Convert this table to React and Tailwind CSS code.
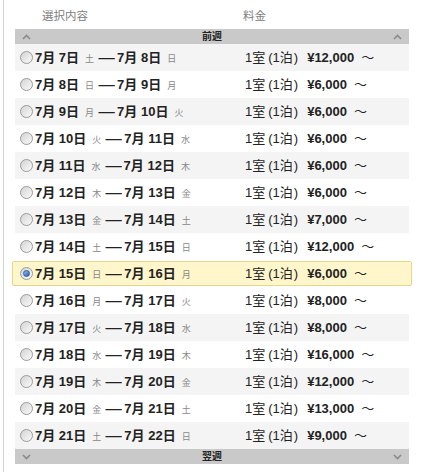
import React from "react";

const rows = [
  ["7月 7日", "土", "7月 8日", "日", "¥12,000"],
  ["7月 8日", "日", "7月 9日", "月", "¥6,000"],
  ["7月 9日", "月", "7月 10日", "火", "¥6,000"],
  ["7月 10日", "火", "7月 11日", "水", "¥6,000"],
  ["7月 11日", "水", "7月 12日", "木", "¥6,000"],
  ["7月 12日", "木", "7月 13日", "金", "¥6,000"],
  ["7月 13日", "金", "7月 14日", "土", "¥7,000"],
  ["7月 14日", "土", "7月 15日", "日", "¥12,000"],
  ["7月 15日", "日", "7月 16日", "月", "¥6,000"],
  ["7月 16日", "月", "7月 17日", "火", "¥8,000"],
  ["7月 17日", "火", "7月 18日", "水", "¥8,000"],
  ["7月 18日", "水", "7月 19日", "木", "¥16,000"],
  ["7月 19日", "木", "7月 20日", "金", "¥12,000"],
  ["7月 20日", "金", "7月 21日", "土", "¥13,000"],
  ["7月 21日", "土", "7月 22日", "日", "¥9,000"],
];

function Radio({ on }) {
  return (
    <span className="w-[13px] h-[13px] rounded-full border border-[#9a9a9a] bg-gradient-to-br from-[#d4d4d4] to-[#fafafa] flex items-center justify-center shrink-0">
      {on && <span className="w-[7px] h-[7px] rounded-full bg-gradient-to-br from-[#8fc3f5] to-[#1d5fb5] border border-[#2a5d9a]" />}
    </span>
  );
}

function Chevron({ up }) {
  return (
    <svg width="9" height="6" viewBox="0 0 9 6" className="shrink-0">
      <path d={up ? "M1 5 L4.5 1.5 L8 5" : "M1 1 L4.5 4.5 L8 1"} fill="none" stroke="#8a8a8a" strokeWidth="1.6" />
    </svg>
  );
}

function Bar({ label, up }) {
  return (
    <div className="h-[15px] bg-[#c9c9c9] flex items-center justify-between px-[7px]">
      <Chevron up={up} />
      <span className="text-[10px] font-bold text-[#222] leading-none">{label}</span>
      <Chevron up={up} />
    </div>
  );
}

export default function App() {
  return (
    <div className="w-[423px] h-[472px] bg-white overflow-hidden" style={{ fontFamily: '"Liberation Sans", "Noto Sans CJK JP", sans-serif' }}>
      <div className="ml-[3px] border-l border-[#d4d4d4] h-full pl-[11px] pr-[12px]">
        <div className="w-[394px]">
          <div className="h-[29px] flex items-end pb-[7px] text-[11.5px] text-[#808080] leading-none">
            <span className="ml-[27px] w-[201px]">選択内容</span>
            <span>料金</span>
          </div>
          <Bar label="前週" up />
          {rows.map((r, i) => {
            const sel = i === 8;
            const bg = i % 2 === 0 ? "bg-[#f4f4f4]" : "bg-white";
            const inner = (
              <>
                <Radio on={sel} />
                <div className="ml-[2px] w-[210px] flex items-baseline text-[#222]">
                  <span className="text-[13px] font-bold">{r[0]}</span>
                  <span className="text-[9px] text-[#888] ml-[6px]">{r[1]}</span>
                  <span className="text-[13px] font-bold ml-[6px] mr-[4px] inline-block scale-x-125">—</span>
                  <span className="text-[13px] font-bold">{r[2]}</span>
                  <span className="text-[9px] text-[#888] ml-[6px]">{r[3]}</span>
                </div>
                <div className="flex items-baseline text-[13px] text-[#222]">
                  <span>1室</span>
                  <span className="ml-[3px]">(</span>
                  <span>1泊</span>
                  <span className="ml-[1px]">)</span>
                  <span className="font-bold ml-[9px]">{r[4]}</span>
                  <span className="ml-[7px]">～</span>
                </div>
              </>
            );
            return sel ? (
              <div key={i} className="h-[27px] -mx-[3px] flex items-center">
                <div className="h-[25px] w-full px-[7px] flex items-center bg-[#fff6cc] border border-[#e6d78a] rounded-[2px]">
                  {inner}
                </div>
              </div>
            ) : (
              <div key={i} className={`h-[27px] px-[5px] flex items-center ${bg}`}>
                {inner}
              </div>
            );
          })}
          <Bar label="翌週" />
        </div>
      </div>
    </div>
  );
}
